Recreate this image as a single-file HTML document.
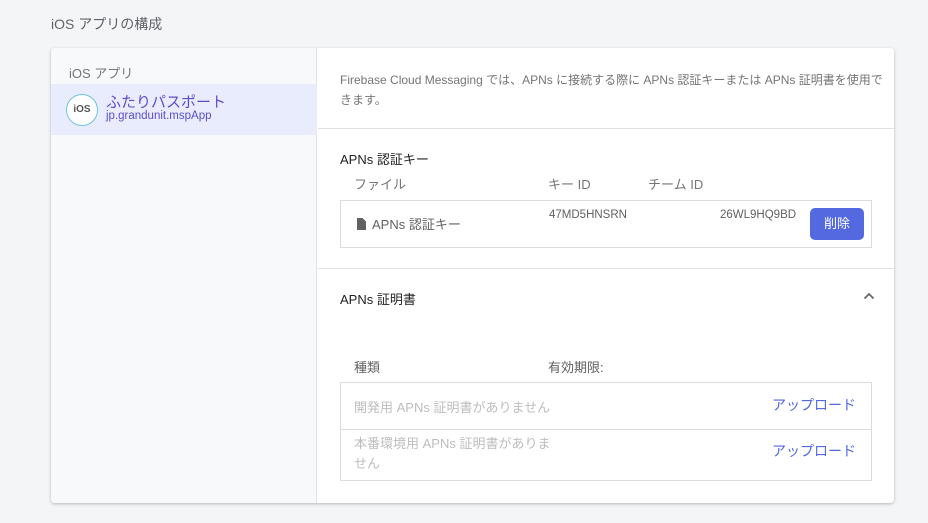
<!DOCTYPE html>
<html><head><meta charset="utf-8"><style>
*{box-sizing:border-box;margin:0;padding:0}
body{width:928px;height:523px;background:#f4f5f7;font-family:"Liberation Sans","Noto Sans CJK JP",sans-serif;position:relative;overflow:hidden;color:#333}
.a{position:absolute;white-space:nowrap}
.card{position:absolute;left:51px;top:48px;width:843px;height:455px;background:#fff;border-radius:4px;box-shadow:0 1px 3px rgba(0,0,0,.25);overflow:hidden}
.left{position:absolute;left:0;top:0;width:266px;height:455px;background:#f8f9fa;border-right:1px solid #e3e3e3}
.box{position:absolute;border:1px solid #dcdcdc}
</style></head><body>
<div class="a" style="left:51px;top:14px;font-size:14px;color:#5f6368">iOS アプリの構成</div>
<div class="card">
 <div class="left">
  <div class="a" style="left:18px;top:15px;font-size:13px;color:#757575">iOS アプリ</div>
  <div style="position:absolute;left:0;top:36px;width:266px;height:51px;background:#e8ecfc"></div>
  <div style="position:absolute;left:15px;top:46px;width:32px;height:32px;border-radius:50%;border:1.5px solid #6cc4dc;background:#fff;font-size:10px;font-weight:bold;color:#555;text-align:center;line-height:29px">iOS</div>
  <div class="a" style="left:55px;top:43px;font-size:15px;color:#5a4fc8">ふたりパスポート</div>
  <div class="a" style="left:55px;top:62px;font-size:11.5px;color:#5a4fc8">jp.grandunit.mspApp</div>
 </div>
 <div class="a" style="left:289px;top:22px;font-size:12px;color:#757575;line-height:20px;white-space:normal;width:550px">Firebase Cloud Messaging では、APNs に接続する際に APNs 認証キーまたは APNs 証明書を使用できます。</div>
 <div style="position:absolute;left:267px;top:80px;width:576px;height:1px;background:#e0e0e0"></div>
 <div class="a" style="left:289px;top:101px;font-size:13px;color:#212121">APNs 認証キー</div>
 <div class="a" style="left:303px;top:126px;font-size:13px;color:#757575">ファイル</div>
 <div class="a" style="left:497px;top:126px;font-size:13px;color:#757575">キー ID</div>
 <div class="a" style="left:597px;top:126px;font-size:13px;color:#757575">チーム ID</div>
 <div class="box" style="left:289px;top:152px;width:532px;height:48px"></div>
 <svg class="a" style="left:306px;top:170px" width="9" height="12" viewBox="0 0 9 12"><path d="M0 0h5.5l3.5 3.5V12H0z" fill="#616161"/></svg>
 <div class="a" style="left:321px;top:166px;font-size:13px;color:#616161">APNs 認証キー</div>
 <div class="a" style="left:498px;top:161px;font-size:11.5px;color:#616161">47MD5HNSRN</div>
 <div class="a" style="left:669px;top:161px;font-size:11.5px;color:#616161">26WL9HQ9BD</div>
 <div class="a" style="left:759px;top:160px;width:54px;height:32px;border-radius:5px;background:#5468e0;color:#fff;font-size:13px;text-align:center;line-height:32px">削除</div>
 <div style="position:absolute;left:267px;top:220px;width:576px;height:1px;background:#e0e0e0"></div>
 <div class="a" style="left:289px;top:241px;font-size:13px;color:#212121">APNs 証明書</div>
 <svg class="a" style="left:812px;top:244px" width="12" height="8" viewBox="0 0 12 8"><path d="M1.5 6.5L6 2l4.5 4.5" stroke="#666" stroke-width="1.8" fill="none"/></svg>
 <div class="a" style="left:303px;top:309px;font-size:13px;color:#616161">種類</div>
 <div class="a" style="left:497px;top:309px;font-size:13px;color:#616161">有効期限:</div>
 <div class="box" style="left:289px;top:334px;width:532px;height:99px"></div>
 <div style="position:absolute;left:289px;top:381px;width:532px;height:1px;background:#dcdcdc"></div>
 <div class="a" style="left:303px;top:349px;font-size:13px;color:#bdbdbd">開発用 APNs 証明書がありません</div>
 <div class="a" style="left:721px;top:347px;font-size:14px;color:#5468e0">アップロード</div>
 <div class="a" style="left:303px;top:386px;font-size:13px;color:#bdbdbd;line-height:20px">本番環境用 APNs 証明書がありま<br>せん</div>
 <div class="a" style="left:721px;top:393px;font-size:14px;color:#5468e0">アップロード</div>
</div>
</body></html>
